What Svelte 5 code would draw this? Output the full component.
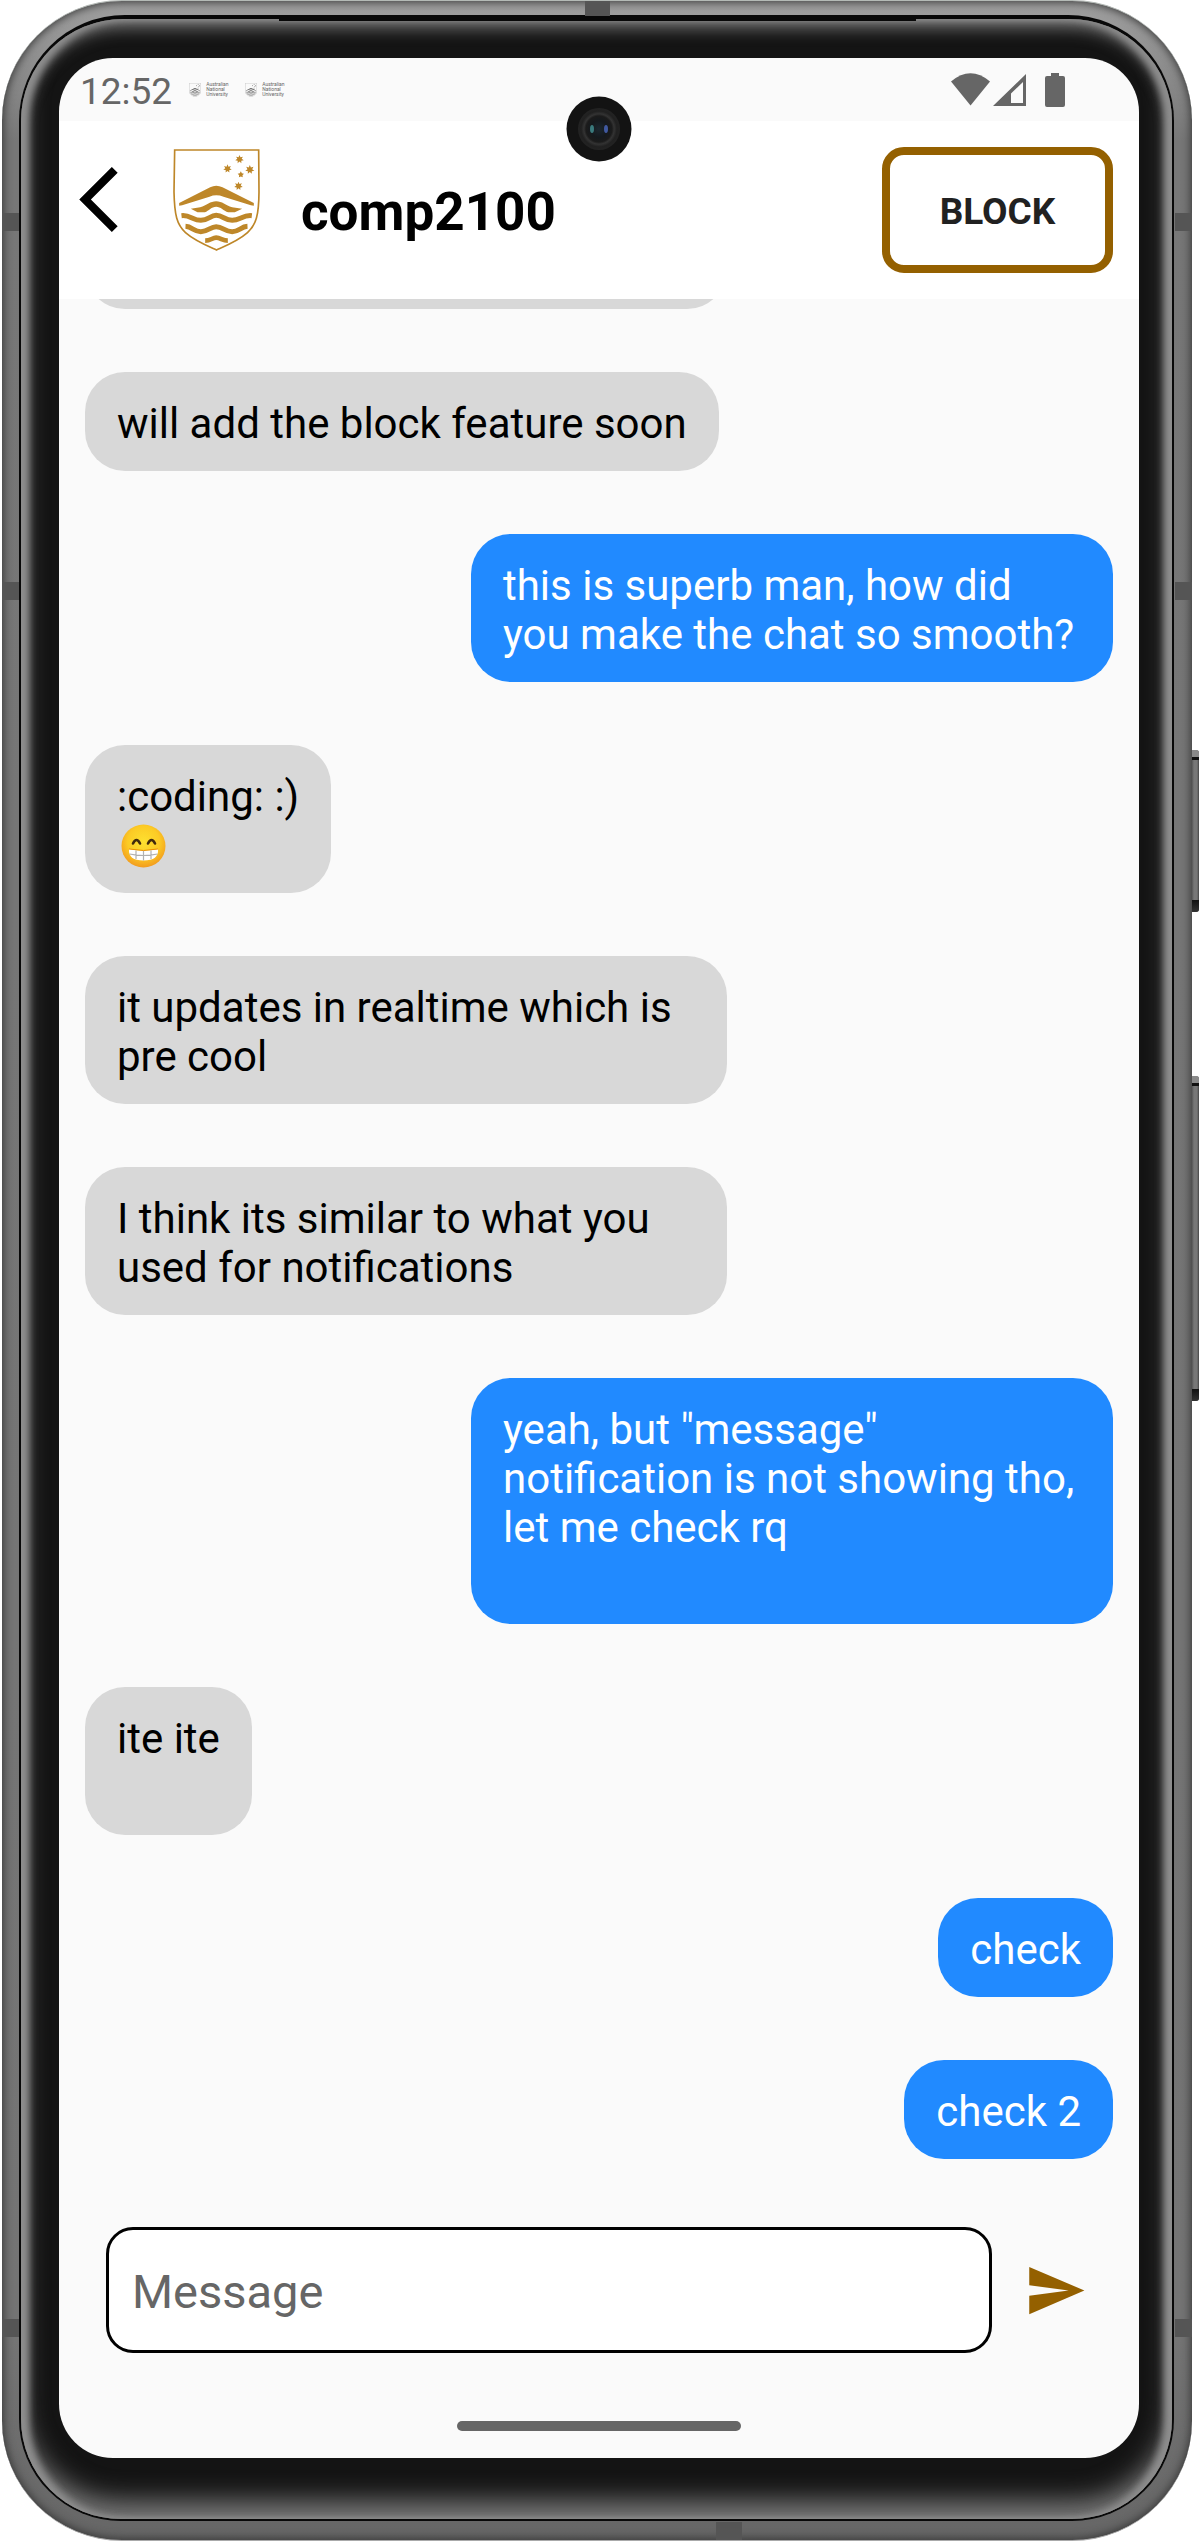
<script>
  const messages = [
    { from: 'them', text: '', earlier: true },
    { from: 'them', text: 'will add the block feature soon' },
    { from: 'me', text: 'this is superb man, how did you make the chat so smooth?' },
    { from: 'them', text: ':coding: :)\n', grin: true },
    { from: 'them', text: 'it updates in realtime which is pre cool' },
    { from: 'them', text: 'I think its similar to what you used for notifications' },
    { from: 'me', text: 'yeah, but "message" notification is not showing tho, let me check rq\n\n' },
    { from: 'them', text: 'ite ite\n\n' },
    { from: 'me', text: 'check' },
    { from: 'me', text: 'check 2' },
  ];

  let draft = $state('');

  function star(cx, cy, outer, points) {
    const inner = outer * 0.52;
    return Array.from({ length: points * 2 }, (_, i) => {
      const r = i % 2 ? inner : outer;
      const a = (Math.PI * i) / points - Math.PI / 2;
      return `${(cx + r * Math.cos(a)).toFixed(1)},${(cy + r * Math.sin(a)).toFixed(1)}`;
    }).join(' ');
  }

  const stars = [
    star(238, 72, 13, 7),
    star(202, 100, 13, 7),
    star(269, 103, 14, 7),
    star(242, 118, 10, 5),
    star(235, 152, 13, 7),
  ];
</script>

{#snippet crest()}
  <svg class="crest" viewBox="40 41 258 306" aria-hidden="true">
    <path
      d="M43.500 44H295.500L296.500 170C296 240 288 268 262 292C235 316 205 328 169 344C133 328 103 316 76 292C50 268 43 240 41.500 170Z"
      fill="none" stroke="currentColor" stroke-width="5" />
    <path
      d="M57 203L150 156Q168 146 187 156L281 203V211L272 210L190 184Q168 176 148 184L66 210L57 211Z"
      fill="currentColor" />
    <path
      d="M92 220L120 216C140 210 150 198 168 198C186 198 196 210 216 216L246 220L224 231H204C190 226 182 214 168 214C154 214 146 226 134 231H112Z"
      fill="currentColor" />
    <g fill="none" stroke="currentColor">
      <path stroke-width="15" d="M64 241C90 238 98 255 122 255C145 255 150 240 168 240C188 240 194 255 216 255C240 255 248 238 275 241" />
      <path stroke-width="15" d="M76 273C96 274 102 289 122 289C145 289 150 274 168 274C188 274 194 289 216 289C236 289 242 274 262 273" />
      <path stroke-width="14" d="M135 316C152 316 156 307 168 307C182 307 186 316 203 316" />
    </g>
    {#each stars as points}
      <polygon {points} fill="currentColor" />
    {/each}
  </svg>
{/snippet}

{#snippet notice()}
  <span class="notice">
    {@render crest()}
    <span class="notice-text">Australian<br />National<br />University</span>
  </span>
{/snippet}

<div class="phone">
  <i class="band left high"></i>
  <i class="band left mid"></i>
  <i class="band left low"></i>
  <i class="band right high"></i>
  <i class="band right mid"></i>
  <i class="band right low"></i>
  <i class="band top"></i>
  <i class="band bottom"></i>
  <i class="key power"></i>
  <i class="key volume"></i>
  <div class="seam">
    <div class="bezel">
      <i class="speaker"></i>
      <main class="screen">
        <div class="camera">
          <svg viewBox="0 0 66 66" aria-hidden="true">
            <defs>
              <radialGradient id="lens">
                <stop offset="0" stop-color="#1b2730" />
                <stop offset=".4" stop-color="#15191d" />
                <stop offset=".62" stop-color="#1b1b1b" />
                <stop offset=".72" stop-color="#333" />
                <stop offset=".85" stop-color="#202020" />
                <stop offset="1" stop-color="#232323" />
              </radialGradient>
            </defs>
            <circle cx="33" cy="33" r="32.500" fill="#131313" />
            <circle cx="33" cy="33" r="21" fill="url(#lens)" />
            <ellipse cx="26" cy="33" rx="2" ry="4" fill="#3a7a7d" />
            <ellipse cx="40" cy="33" rx="2" ry="4" fill="#4059a0" />
          </svg>
        </div>

        <div class="status">
          <time>12:52</time>
          {@render notice()}
          {@render notice()}
          <svg class="signals" viewBox="0 0 114 34" aria-hidden="true" fill="#666">
            <path d="M0 8.500Q19.500 -8 39 8.500L19.500 32.500Z" />
            <path d="M42 33L75 1V33ZM60 30H72V9L60 20.500Z" fill-rule="evenodd" />
            <path d="M100 0h8v3h4q2 0 2 2v27q0 2-2 2H96q-2 0-2-2V5q0-2 2-2h4z" />
          </svg>
        </div>

        <header>
          <div class="lead">
            <button class="back" aria-label="Back">
              <svg viewBox="0 0 12 24" aria-hidden="true">
                <path d="M11.670 3.870L9.900 2.100 0 12l9.900 9.900 1.770-1.770L3.540 12z" />
              </svg>
            </button>
            <span class="avatar">{@render crest()}</span>
          </div>
          <h1>comp2100</h1>
          <button class="block">BLOCK</button>
        </header>

        <section class="messages" aria-label="Messages">
          {#each messages as m}
            <p class="bubble {m.from}" class:earlier={m.earlier}>{m.text}{#if m.grin}<svg class="grin" viewBox="0 0 45 44" role="img" aria-label="grinning face">
                  <defs>
                    <radialGradient id="face" cx=".5" cy=".4" r=".6">
                      <stop offset="0" stop-color="#fde030" />
                      <stop offset=".6" stop-color="#fccb25" />
                      <stop offset="1" stop-color="#f29b1e" />
                    </radialGradient>
                  </defs>
                  <ellipse cx="22.500" cy="22" rx="22" ry="21.500" fill="url(#face)" />
                  <path d="M12 19.500Q15.500 12.500 19 19.500M27 19.500Q30.500 12.500 34 19.500" fill="none" stroke="#422b0d" stroke-width="2.600" stroke-linecap="round" />
                  <path d="M8 25Q22.500 28 37 25Q38 36.500 22.500 36.500Q7 36.500 8 25Z" fill="#fff" />
                  <path d="M8 25Q22.500 28 37 25" fill="none" stroke="#eb8f00" stroke-width="1" />
                  <path d="M8.500 30Q22.500 33 36.500 30M15 26.500V35M22.500 27V36.500M30 26.500V35" fill="none" stroke="#b0b0b0" stroke-width="1.200" />
                </svg>{/if}</p>
          {/each}
        </section>

        <form class="composer" onsubmit={(e) => e.preventDefault()}>
          <input type="text" placeholder="Message" aria-label="Message" bind:value={draft} />
          <button class="send" aria-label="Send">
            <svg viewBox="0 0 24 24" aria-hidden="true">
              <path d="M2 21L23 12 2 3v7l15 2-15 2z" />
            </svg>
          </button>
        </form>

        <div class="home"><i></i></div>
      </main>
    </div>
  </div>
</div>

<style>
  :global(body) {
    margin: 0;
    background: #fff;
  }

  .phone {
    position: relative;
    box-sizing: border-box;
    margin: 0 8px 0 2px;
    padding: 14px 18px 19px 17px;
    border-top: 1px solid #b4bab6;
    border-bottom: 1px solid #aaa;
    border-radius: 120px;
    background: linear-gradient(#a0a0a0, #777 140px, #747474 calc(100% - 200px), #666);
    box-shadow: inset 0 0 10px 1px #333;
    font-family: Roboto, sans-serif;
  }

  .seam {
    padding: 4px 2px 2px;
    border-radius: 106px 106px 102px 102px;
    background: #080808;
  }

  .bezel {
    position: relative;
    padding: 39px 33px 61px 38px;
    border-radius: 102px 102px 100px 100px;
    background: #141414;
    box-shadow:
      inset 8px 0 7px #8e8e8e,
      inset -8px 0 7px #8e8e8e,
      inset 0 9px 16px #757575,
      inset 0 -18px 26px #7a7a7a;
  }

  .speaker {
    position: absolute;
    top: 0;
    left: 258px;
    right: 256px;
    height: 2px;
    background: #080808;
  }

  .band {
    position: absolute;
    background: #555;
  }

  .left,
  .right {
    width: 17px;
    height: 18px;
  }

  .left {
    left: 0;
  }

  .right {
    right: 0;
  }

  .high {
    top: 212px;
  }

  .mid {
    top: 581px;
  }

  .low {
    bottom: 203px;
  }

  .top {
    top: 0;
    left: 583px;
    width: 25px;
    height: 15px;
  }

  .bottom {
    bottom: 0;
    left: 714px;
    width: 26px;
    height: 18px;
  }

  .key {
    position: absolute;
    left: 100%;
    box-sizing: border-box;
    width: 7px;
    border-radius: 0 3px 3px 0;
    background: linear-gradient(90deg, #555, #777 2px, #777 5px, #444);
  }

  .key::before {
    content: '';
    display: block;
    height: 7px;
    border-bottom: 3px solid #111;
    border-radius: 0 3px 0 0;
    background: #8a8a8a;
  }

  .key::after {
    content: '';
    position: absolute;
    inset: auto 0 0;
    height: 12px;
    border-radius: 0 0 3px 0;
    background: linear-gradient(#111, #333);
  }

  .power {
    top: 749px;
    height: 162px;
  }

  .volume {
    top: 1075px;
    height: 325px;
  }

  .screen {
    position: relative;
    overflow: hidden;
    border-radius: 54px;
    background: #fafafa;
  }

  .camera {
    position: absolute;
    top: 38px;
    left: calc(50% - 33px);
    width: 66px;
    height: 66px;
  }

  svg {
    display: block;
  }

  .status {
    display: flex;
    align-items: center;
    gap: 17px;
    box-sizing: border-box;
    height: 63px;
    padding: 0 74px 0 21px;
    color: #666;
  }

  time {
    padding-top: 4px;
    font-size: 37px;
    line-height: 44px;
  }

  .notice {
    display: flex;
    gap: 5px;
    align-items: center;
  }

  .notice .crest {
    width: 12px;
    height: 14px;
  }

  .notice-text {
    width: 22px;
    font-size: 5px;
    line-height: 5px;
  }

  .signals {
    width: 114px;
    height: 34px;
    margin-left: auto;
  }

  header {
    display: flex;
    align-items: center;
    box-sizing: border-box;
    height: 178px;
    padding: 0 26px 0 20px;
    background: #fff;
  }

  button {
    padding: 0;
    border: 0;
    background: none;
    font: inherit;
    cursor: pointer;
  }

  .lead {
    display: flex;
    align-items: center;
    gap: 54px;
    padding-bottom: 21px;
  }

  .back svg {
    width: 40px;
    height: 79px;
  }

  .avatar {
    color: #be8729;
  }

  .avatar .crest {
    width: 87px;
    height: 102px;
  }

  h1 {
    margin: 0 auto 0 41px;
    padding-top: 4px;
    font-size: 53px;
    line-height: 62px;
    font-weight: 700;
  }

  .block {
    box-sizing: border-box;
    width: 231px;
    height: 126px;
    padding-top: 2px;
    border: 8px solid #946000;
    border-radius: 22px;
    color: #212121;
    font-size: 37px;
    font-weight: 700;
  }

  .messages {
    display: flex;
    flex-direction: column;
    align-items: flex-start;
    gap: 63px;
    overflow: hidden;
    padding: 0 26px 68px;
  }

  .bubble {
    box-sizing: border-box;
    max-width: 642px;
    min-height: 99px;
    margin: 0;
    padding: 27px 32px 23px;
    border-radius: 40px;
    background: #d8d8d8;
    color: #000;
    font-size: 42px;
    line-height: 49px;
    white-space: pre-wrap;
  }

  .me {
    align-self: flex-end;
    background: #218aff;
    color: #fff;
  }

  .earlier {
    width: 642px;
    margin-top: -89px;
  }

  .grin {
    width: 45px;
    height: 44px;
    margin: 3px 4px 2px;
  }

  .composer {
    display: flex;
    align-items: center;
    gap: 32px;
    padding: 0 52px 0 47px;
  }

  input {
    box-sizing: border-box;
    flex: 1;
    min-width: 0;
    height: 126px;
    padding: 2px 23px 0;
    border: 3px solid #000;
    border-radius: 27px;
    background: #fff;
    color: #000;
    font: 47px/56px Roboto, sans-serif;
  }

  input::placeholder {
    color: #666;
    opacity: 1;
  }

  .send svg {
    width: 63px;
    height: 63px;
    fill: #946000;
  }

  .home {
    display: flex;
    justify-content: center;
    padding: 68px 0 27px;
  }

  .home i {
    width: 284px;
    height: 10px;
    border-radius: 5px;
    background: #666;
  }
</style>
